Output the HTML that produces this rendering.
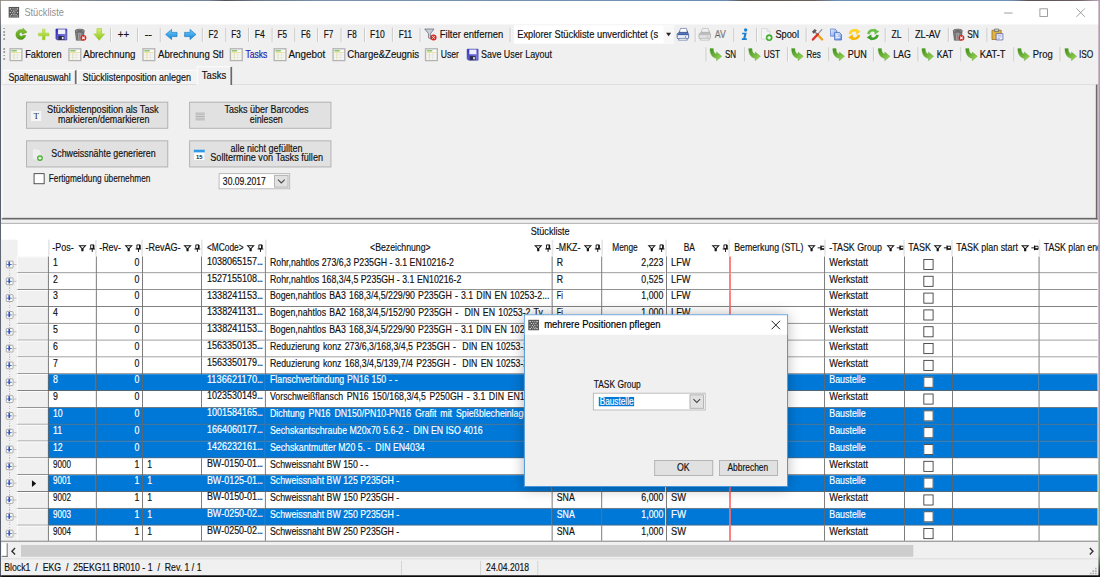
<!DOCTYPE html>
<html lang="de"><head><meta charset="utf-8"><title>Stückliste</title>
<style>
html,body{margin:0;padding:0;background:#0a0a0a;overflow:hidden;}
body{width:1100px;height:577px;position:relative;font-family:"Liberation Sans",sans-serif;}
#root{position:absolute;left:0;top:0;width:1308px;height:687px;transform-origin:0 0;overflow:hidden;background:#0b0b0b;}
#root *{box-sizing:border-box;}
#bgtop{position:absolute;left:0;top:0;width:1308px;height:3px;background:linear-gradient(90deg,#8c857a 0%,#857f78 6%,#5f6c80 9%,#566a84 19%,#2c2c36 20.5%,#4a5a70 23%,#5f7fa0 30%,#56789c 45%,#4f7aa8 60%,#4a74a0 66%,#3a3230 67.5%,#4a4038 74%,#4f7aa8 76%,#4f7aa8 92%,#3a2a30 93.5%,#4a3a40 98%,#b79ab4 100%);}
#bgright{position:absolute;left:1305px;top:0;width:3px;height:687px;background:linear-gradient(180deg,#b79ab4 0%,#b092ae 70%,#a8a0a8 78%,#8fae8a 84%,#86a682 96%,#1a1a1a 99.5%);}
#bgleft{position:absolute;left:0;top:0;width:2px;height:687px;background:linear-gradient(180deg,#8a857d 0%,#6f6f74 3%,#3c4658 6%,#3a4356 60%,#2f3646 100%);}
#win{position:absolute;left:1px;top:1px;width:1305px;height:683px;background:#f0f0f0;overflow:hidden;}
/* title */
#title{position:absolute;left:0;top:0;width:1305px;height:28.2px;background:#fff;}
.appico{position:absolute;}
.ttxt{position:absolute;font-size:12.1px;color:#929292;line-height:16px;height:16px;white-space:nowrap;}
.wc{position:absolute;top:8.6px;width:10px;height:10px;overflow:visible;}
/* toolbars */
#tb1,#tb2{position:static;}
.ic{position:absolute;overflow:visible;}
.sep{position:absolute;width:2px;height:17px;border-left:1px solid #c5c5c5;border-right:1px solid #fbfbfb;}
.grip{position:absolute;width:2px;height:15px;background:repeating-linear-gradient(180deg,#9c9c9c 0,#9c9c9c 2px,transparent 2px,transparent 4px);}
.tt{-webkit-text-stroke:0.2px #111;position:absolute;font-size:12.1px;line-height:18px;height:18px;white-space:nowrap;color:#111;}
.tt.blue{color:#2a1be0;}
.tt.dis{color:#9a9a9a;}
.combo1{position:absolute;background:#fff;}
.combo1 .ddz{position:absolute;right:0;top:0;bottom:0;width:12px;background:#f8f8f8;}
.combo1 .dd{position:absolute;right:2.5px;top:9px;width:0;height:0;border-left:3.5px solid transparent;border-right:3.5px solid transparent;border-top:4px solid #222;}
/* tabs */
#tabs{position:absolute;left:0;top:76px;width:1305px;height:30px;}
.tab{-webkit-text-stroke:0.2px;position:absolute;font-size:12.3px;line-height:14px;color:#111;white-space:nowrap;}
#tabpage{position:absolute;left:1.5px;top:99.7px;width:1297px;height:159px;border-top:1px solid #dcdcdc;border-right:2px solid #696969;border-bottom:2px solid #696969;border-left:1px solid #fff;background:#f0f0f0;}
.btn{position:absolute;background:#e1e1e1;border:1px solid #adadad;font-size:11.3px;line-height:13px;color:#111;text-align:center;}
.btn .bi{position:absolute;width:16px;height:16px;}
.btn .bt{position:absolute;left:22px;right:2px;top:50%;transform:translateY(-50%);white-space:nowrap;}
.chk{position:absolute;width:13px;height:13px;border:1px solid #333;background:#fff;}
.lbl{-webkit-text-stroke:0.2px;position:absolute;font-size:12.3px;line-height:14px;color:#111;white-space:nowrap;}
.dcombo{position:absolute;background:#fff;border:1px solid #adadad;}
.dcombo .v{position:absolute;left:4px;top:2px;font-size:11.3px;line-height:14px;color:#111;}
.ddb{position:absolute;right:1px;top:1px;bottom:1px;width:17px;background:#e1e1e1;border:1px solid #adadad;}
.ddb svg{position:absolute;left:3px;top:4.5px;width:9px;height:6px;overflow:visible;}
/* grid */
#grid{position:static;}
#gbg{position:absolute;left:0;top:264.3px;width:1305px;height:380px;background:#fff;border-top:1px solid #a0a0a0;}
.gt{-webkit-text-stroke:0.2px;position:absolute;font-size:12.3px;line-height:14px;height:14px;color:#111;white-space:nowrap;}
#gleft{position:absolute;background:#f0f0f0;}
.hs{position:absolute;width:2px;background:#e6e6e6;}
.hf{position:absolute;overflow:visible;}
.row{position:absolute;left:0;width:1305px;}
.row .c{-webkit-text-stroke:0.2px;position:absolute;top:0;height:100%;border-left:1.3px solid #646464;border-bottom:1.3px solid #646464;font-size:12.3px;line-height:14.4px;color:#111;white-space:pre;overflow:hidden;padding:0 3.2px 0 5.2px;background:#fff;}
.row .c.ar{text-align:right;padding-right:3.2px;}
.row .c em{font-style:normal;letter-spacing:-1.1px;}
.row .c.ac{text-align:center;padding:0;}
.row .c.mc{line-height:12.4px;}
.row.sel .c{background:#0078d7;color:#fff;}
.row .c.red{border-left:2.2px solid #ff6a6a;}
.rh{position:absolute;top:0;height:100%;background:#f0f0f0;border-bottom:1.3px solid #646464;border-top:1.2px solid #fff;border-left:1.4px solid #fff;}
.cur{position:absolute;left:17px;top:5px;width:0;height:0;border-top:4.5px solid transparent;border-bottom:4.5px solid transparent;border-left:5.5px solid #111;}
.exp{position:absolute;left:5.6px;top:4.7px;width:9.2px;height:9.2px;border:1.2px solid #9a9a9a;border-radius:1.2px;background:#fff;z-index:2;}
.exp:before{content:"";position:absolute;left:0.7px;top:2.85px;width:5.4px;height:1.2px;background:#2f55c0;}
.exp:after{content:"";position:absolute;left:2.8px;top:0.7px;width:1.2px;height:5.4px;background:#2f55c0;}
.expl{position:absolute;left:14.8px;top:8.9px;width:4px;height:1px;background:#b8b8b8;}
.expl:after{content:"";position:absolute;left:-5.2px;top:5px;width:1px;height:10.6px;background:repeating-linear-gradient(180deg,#b0b0b0 0,#b0b0b0 1px,transparent 1px,transparent 2px);}
.row:last-child .expl:after{display:none;}
.cb{display:inline-block;width:12.4px;height:12.6px;border:1.25px solid #333;background:#fff;margin-top:3px;vertical-align:top;}
/* bottom */
#hs{position:absolute;left:0;top:643.4px;width:1305px;height:19.6px;background:#f0f0f0;border-top:1.2px solid #6e6e6e;}
#hs .thumb{position:absolute;background:#cdcdcd;}
#hs .crn{position:absolute;background:#fff;border-right:1.6px solid #555;border-bottom:1.6px solid #555;}
#hs .ar{position:absolute;overflow:visible;}
#status{position:absolute;left:0;top:663px;width:1305px;height:21px;background:#f0f0f0;border-top:1px solid #d9d9d9;font-size:11.3px;color:#111;}
#status span{position:absolute;top:4px;line-height:14px;white-space:nowrap;}
#status i{position:absolute;top:2px;width:1px;height:17px;background:#d0d0d0;}
/* dialog */
#dlg{position:absolute;background:#f0f0f0;border:1.4px solid #2f86d8;box-shadow:0 1px 16px rgba(0,0,0,.30);}
#dlg .dt{position:absolute;left:0;top:0;right:0;background:#fff;}
#dlgc{position:absolute;left:1px;top:1px;width:0;height:0;}
.dtt{-webkit-text-stroke:0.2px;position:absolute;font-size:12.1px;line-height:16px;height:16px;color:#000;white-space:nowrap;}
.hlbg{position:absolute;background:#0078d7;}

.tabu{position:absolute;background:#f3f3f3;border-top:1px solid #fff;border-left:1px solid #fff;border-right:2px solid #696969;}
.tabu.nor{border-right:none;}
.tabs{position:absolute;background:#f0f0f0;border-top:1px solid #fff;border-left:1px solid #fff;border-right:2px solid #696969;}
.dico{position:absolute;}
.dx{position:absolute;overflow:visible;}
.v.hl{background:#0078d7;color:#fff;padding:0 1px;left:3px !important;}
.bt2{position:absolute;left:0;right:0;top:50%;transform:translateY(-50%);line-height:13px;}
.szg{position:absolute;right:1px;bottom:1px;width:12px;height:12px;}
.fx{transform-origin:0 50%;}
.row .c .x{display:inline-block;transform-origin:0 50%;vertical-align:top;}
.row .c.ar .x{transform-origin:100% 50%;}

</style></head>
<body>
<svg width="0" height="0" style="position:absolute">
<defs>
<linearGradient id="gGreen" x1="0" y1="0" x2="0" y2="1"><stop offset="0" stop-color="#b6e04a"/><stop offset="1" stop-color="#5a9e12"/></linearGradient>
<linearGradient id="gBlue" x1="0" y1="0" x2="0" y2="1"><stop offset="0" stop-color="#6fd0ff"/><stop offset="1" stop-color="#1583d6"/></linearGradient>
<linearGradient id="gYel" x1="0" y1="0" x2="0" y2="1"><stop offset="0" stop-color="#ffe169"/><stop offset="1" stop-color="#f2a900"/></linearGradient>
<linearGradient id="gGreen2" x1="0" y1="0" x2="0" y2="1"><stop offset="0" stop-color="#8cc63a"/><stop offset="1" stop-color="#4f9a14"/></linearGradient>
<linearGradient id="gGreenL" x1="0" y1="0" x2="0" y2="1"><stop offset="0" stop-color="#d4f06a"/><stop offset="1" stop-color="#8cc21e"/></linearGradient>
<linearGradient id="gSave" x1="0" y1="0" x2="1" y2="1"><stop offset="0" stop-color="#2f2fc0"/><stop offset="1" stop-color="#8c8ce0"/></linearGradient>
<linearGradient id="gTrash" x1="0" y1="0" x2="1" y2="0"><stop offset="0" stop-color="#6e6e6e"/><stop offset=".5" stop-color="#b4b4b4"/><stop offset="1" stop-color="#6a6a6a"/></linearGradient>
<linearGradient id="gArrow" x1="0" y1="0" x2="1" y2="1"><stop offset="0" stop-color="#3c8f1a"/><stop offset="1" stop-color="#a4dc5c"/></linearGradient>
<linearGradient id="gPage" x1="0" y1="0" x2="1" y2="1"><stop offset="0" stop-color="#eef4ff"/><stop offset="1" stop-color="#6f9ae6"/></linearGradient>
<g id="i-app"><rect x="0" y="0" width="16" height="16" fill="#565656"/><path d="M2 2h2v2h-2zM6 2h1.5v1.5H6zM9 2.5h1.5V4H9zM12 2h2v2h-2zM4 5h1.5v1.5H4zM7 5.5h2V7H7zM10.5 5h1.5v1.5h-1.5zM2 7.5h1.5V9H2zM5.5 8h1.5v1.5H5.5zM9 8h1.5v1.5H9zM12.5 7.5H14V9h-1.5zM4 10.5h1.5V12H4zM7 10h2v1.5H7zM10.5 10.5H12V12h-1.5zM2 12.5h2v1.5H2zM6 13h1.5v1H6zM9 12.5h1.5V14H9zM12 12.5h2v1.5h-2z" fill="#d8d8d8"/></g>
<g id="i-refresh"><path d="M13.6 9A5.9 5.9 0 1 1 9.6 2.5L10.4 0.6L15.2 5.2L9 7.6L9.7 5.8A2.4 2.4 0 1 0 10.4 9z" fill="url(#gGreen2)" stroke="#4c8f12" stroke-width=".5"/></g>
<g id="i-plus"><path d="M6.4 1.8h3.2v4.6h4.6v3.2H9.6v4.6H6.4V9.6H1.8V6.4h4.6z" fill="url(#gGreenL)" stroke="#9bcf2a" stroke-width=".6"/></g>
<g id="i-save"><path d="M1.5 1.5h13v13h-11.5l-1.5-1.5z" fill="url(#gSave)" stroke="#2a2aa0" stroke-width=".7"/><rect x="4" y="2" width="8.5" height="5.5" fill="#f0f0fa"/><rect x="4.5" y="9.8" width="7" height="4.7" fill="#2b2b4a"/><rect x="8.6" y="10.8" width="2" height="2.8" fill="#e8e8f4"/></g>
<g id="i-trash"><path d="M2.6 4.4h10.4l-1.2 10.4H3.8z" fill="url(#gTrash)" stroke="#4a4a4a" stroke-width=".7"/><ellipse cx="7.8" cy="3.8" rx="5.6" ry="2.2" fill="#9a9a9a" stroke="#4a4a4a" stroke-width=".7"/><ellipse cx="7.8" cy="3.8" rx="4" ry="1.2" fill="#6a6a6a"/><path d="M5.2 7v6.6M7.8 7v6.8M10.4 7v6.6" stroke="#5a5a5a" stroke-width=".7"/><circle cx="12.2" cy="12" r="3.5" fill="#d8261c"/><path d="M10.8 10.6l2.8 2.8M13.6 10.6l-2.8 2.8" stroke="#fff" stroke-width="1.2"/></g>
<g id="i-down"><path d="M5.2 1h5.6v6.4h3.6L8 15 1.6 7.4h3.6z" fill="url(#gGreenL)" stroke="#93c524" stroke-width=".6"/></g>
<g id="i-left"><path d="M8 2v3.5h6.5v5H8V14L1 8z" fill="url(#gBlue)" stroke="#1b78c2" stroke-width=".8"/></g>
<g id="i-right"><path d="M8 2v3.5H1.5v5H8V14l7-6z" fill="url(#gBlue)" stroke="#1b78c2" stroke-width=".8"/></g>
<g id="i-filter"><path d="M1 1.5h11L8 7v6.5L5.5 12V7z" fill="#c8cdd6" stroke="#5a6170" stroke-width=".8"/><circle cx="11.5" cy="11.5" r="3.6" fill="#d8261c"/><path d="M10 10l3 3M13 10l-3 3" stroke="#fff" stroke-width="1.1"/></g>
<g id="i-printer"><path d="M2 6.8L4.4 3.2H13.4L14.8 6.8Z" fill="#3f62a8"/><path d="M5.2 0.8H12.2L13.2 5.4H3.8Z" fill="#ffffff" stroke="#2b4688" stroke-width=".6"/><rect x="1.2" y="6.6" width="13.6" height="6.4" rx="1.2" fill="#eef3fb" stroke="#2b4688" stroke-width=".9"/><rect x="1.6" y="6.9" width="12.8" height="1.9" fill="#3f62a8"/><rect x="10.4" y="10.2" width="1.3" height="1.3" fill="#c83a2a"/><path d="M3.6 12.6h8.8l.9 2.2H2.7z" fill="#ffffff" stroke="#2b4688" stroke-width=".6"/></g>
<g id="i-printerg"><path d="M2 6.8L4.4 3.2H13.4L14.8 6.8Z" fill="#bdbdbd"/><path d="M5.2 0.8H12.2L13.2 5.4H3.8Z" fill="#efefef" stroke="#a8a8a8" stroke-width=".6"/><rect x="1.2" y="6.6" width="13.6" height="6.4" rx="1.2" fill="#e2e2e2" stroke="#a8a8a8" stroke-width=".9"/><rect x="1.6" y="6.9" width="12.8" height="1.9" fill="#bdbdbd"/><rect x="10.4" y="10.2" width="1.3" height="1.3" fill="#b0b0b0"/><path d="M3.6 12.6h8.8l.9 2.2H2.7z" fill="#efefef" stroke="#a8a8a8" stroke-width=".6"/></g>
<g id="i-info"><circle cx="9.6" cy="2.7" r="2" fill="#1c7fd0"/><path d="M5.6 5.8h5.4l-1.7 6.8h1.9l-.4 1.9H4.9l.4-1.9h1.5l1.2-4.9H5.2z" fill="#1c7fd0"/></g>
<g id="i-docplus"><path d="M2.5 1h6.5l3.5 3.5V13.5h-10z" fill="#f4f4f4" stroke="#d2d2d2" stroke-width=".8"/><path d="M9 1v3.5h3.5" fill="none" stroke="#d2d2d2" stroke-width=".8"/><circle cx="11.6" cy="11.8" r="3.7" fill="#3fae2a" stroke="#2c8a1c" stroke-width=".4"/><circle cx="11.6" cy="11.8" r="2.4" fill="#7fd36a"/><path d="M11.6 10v3.6M9.8 11.8h3.6" stroke="#fff" stroke-width="1.3"/></g>
<g id="i-tools"><path d="M4.5 4.5L8.2 8.4" stroke="#8a8a8a" stroke-width="1.8"/><path d="M8.2 8.4L13.6 14" stroke="#f0a01e" stroke-width="2.8" stroke-linecap="round"/><path d="M1.4 4.8L4.8 1.4L7.2 3.4L3.6 7z" fill="#5a5a5a"/><path d="M13.6 1.6L8.6 7.6" stroke="#8f8f8f" stroke-width="1.3"/><path d="M8.4 7.8L2.6 14" stroke="#d8322a" stroke-width="2.8" stroke-linecap="round"/></g>
<g id="i-copy"><path d="M1.5 1.5h5.5l2 2V10h-7.5z" fill="url(#gPage)" stroke="#4a72c8" stroke-width=".8"/><path d="M6.5 5.5h5.5l2.5 2.5V14.5h-8z" fill="url(#gPage)" stroke="#2f5cc0" stroke-width=".9"/><path d="M8.2 9.5h2.5M8.2 11.5h4.5" stroke="#fff" stroke-width=".9"/></g>
<g id="i-syncy"><path d="M2.6 7.6A5.4 5.4 0 0 1 11.4 4.2" fill="none" stroke="#ffd42a" stroke-width="3"/><path d="M9.6 0.9L15.4 4.4L10 8.2z" fill="#ffd42a"/><path d="M13.4 8.4A5.4 5.4 0 0 1 4.6 11.8" fill="none" stroke="#f7b500" stroke-width="3"/><path d="M6.4 15.1L0.6 11.6L6 7.8z" fill="#f7b500"/></g>
<g id="i-syncg"><path d="M2.6 7.6A5.4 5.4 0 0 1 11.4 4.2" fill="none" stroke="#6cc04a" stroke-width="3"/><path d="M9.6 0.9L15.4 4.4L10 8.2z" fill="#6cc04a"/><path d="M13.4 8.4A5.4 5.4 0 0 1 4.6 11.8" fill="none" stroke="#3f9f2a" stroke-width="3"/><path d="M6.4 15.1L0.6 11.6L6 7.8z" fill="#3f9f2a"/></g>
<g id="i-clip"><path d="M1.5 3h11v11h-11z" fill="#e2b340" stroke="#8a6414" stroke-width=".8"/><path d="M4.5 1.5h5v3h-5z" fill="#c8c8c8" stroke="#555" stroke-width=".7"/><path d="M6.5 7h8v7.5h-8z" fill="#f8f8ff" stroke="#44509a" stroke-width=".8"/><path d="M8 9h5M8 11h5M8 13h3" stroke="#7a84c0" stroke-width=".7"/></g>
<g id="i-table"><rect x="1" y="1" width="14" height="14" fill="#fafaf4" stroke="#b4b4b4" stroke-width="1.6"/><rect x="2.6" y="2.6" width="6.4" height="1.6" fill="#7fc060"/><path d="M2.2 5.6h11.6M5.6 5.6v8.2" stroke="#e4d88a" stroke-width="1"/><path d="M2.2 8.4h11.6M2.2 11.2h11.6M9.6 5.6v8.2" stroke="#dcdcdc" stroke-width=".8"/></g>
<g id="i-garrow"><path d="M1.2 0.8L5.2 0.8C5.2 4.5 6.5 7 9 7.5L9 4.8L15.2 10L9 15.2L9 12.3C4 12 1.2 7.5 1.2 0.8Z" fill="url(#gArrow)" stroke="#5a9e2a" stroke-width=".4"/></g>
<g id="i-filt"><path d="M0 0.5H10L6.3 4.6V7.7H3.7V4.6Z" fill="#111"/><path d="M2.7 1.8H7.3L5 4.2Z" fill="#fff"/></g>
<g id="i-pin"><path d="M1.5 0.6H5.3V5H1.5Z" fill="#fff" stroke="#111" stroke-width="1.1"/><path d="M4 0.6H5.6V5H4Z" fill="#111"/><path d="M0 5.4H6.8" stroke="#111" stroke-width="1.3"/><path d="M3.4 5.4V9" stroke="#111" stroke-width="1.1"/></g>
<g id="i-pinh"><path d="M4.2 1.2H8.2V4.8H4.2Z" fill="#fff" stroke="#111" stroke-width="1.1"/><path d="M4.2 3.6H8.4V5.2H4.2Z" fill="#111"/><path d="M3.8 0.2V6" stroke="#111" stroke-width="1.3"/><path d="M0 3.1H3.8" stroke="#111" stroke-width="1.1"/></g>
</defs>
</svg>

<div id="root" style="transform:scale(0.841);">
<div id="bgleft"></div><div id="bgright"></div><div id="bgtop"></div>
<div id="win">
<div id="title"><svg class="appico" style="left:8.8px;top:6.8px;width:13.0px;height:13.3px" viewBox="0 0 16 16"><use href="#i-app"/></svg><span class="ttxt fx" style="left:27.8px;top:6.0px;transform:scaleX(0.908);">Stückliste</span><svg class="wc" style="left:1192.6px" viewBox="0 0 10 10"><path d="M0 5.5H10" stroke="#8e8e8e" fill="none"/></svg><svg class="wc" style="left:1235.1px" viewBox="0 0 10 10"><rect x="0.5" y="0.5" width="9" height="9" stroke="#8e8e8e" fill="none"/></svg><svg class="wc" style="left:1279.1px" viewBox="0 0 10 10"><path d="M0 0L10 10M10 0L0 10" stroke="#8e8e8e" fill="none"/></svg></div>
<div id="tb1"><i class="grip" style="left:2.9px;top:32.4px"></i><svg class="ic" style="left:15.5px;top:32.0px;width:16px;height:16px" viewBox="0 0 16 16"><use href="#i-refresh"/></svg><svg class="ic" style="left:42.7px;top:32.0px;width:16px;height:16px" viewBox="0 0 16 16"><use href="#i-plus"/></svg><svg class="ic" style="left:64.2px;top:32.0px;width:16px;height:16px" viewBox="0 0 16 16"><use href="#i-save"/></svg><svg class="ic" style="left:86.1px;top:32.0px;width:16px;height:16px" viewBox="0 0 16 16"><use href="#i-trash"/></svg><svg class="ic" style="left:108.5px;top:32.0px;width:16px;height:16px" viewBox="0 0 16 16"><use href="#i-down"/></svg><i class="sep" style="left:129.7px;top:31.5px"></i><span class="tt fx " style="left:138.5px;top:31.4px;transform:scaleX(0.959)">++</span><i class="sep" style="left:162.0px;top:31.5px"></i><span class="tt fx " style="left:170.8px;top:31.4px;transform:scaleX(1.077)">--</span><i class="sep" style="left:189.2px;top:31.5px"></i><svg class="ic" style="left:194.8px;top:32.0px;width:16px;height:16px" viewBox="0 0 16 16"><use href="#i-left"/></svg><svg class="ic" style="left:216.9px;top:32.0px;width:16px;height:16px" viewBox="0 0 16 16"><use href="#i-right"/></svg><i class="sep" style="left:238.8px;top:31.5px"></i><i class="sep" style="left:266.5px;top:31.5px"></i><i class="sep" style="left:293.9px;top:31.5px"></i><i class="sep" style="left:321.6px;top:31.5px"></i><i class="sep" style="left:349.1px;top:31.5px"></i><i class="sep" style="left:376.3px;top:31.5px"></i><i class="sep" style="left:404.2px;top:31.5px"></i><i class="sep" style="left:431.8px;top:31.5px"></i><i class="sep" style="left:465.3px;top:31.5px"></i><i class="sep" style="left:497.8px;top:31.5px"></i><span class="tt fx " style="left:246.6px;top:31.4px;transform:scaleX(0.808)">F2</span><span class="tt fx " style="left:274.0px;top:31.4px;transform:scaleX(0.808)">F3</span><span class="tt fx " style="left:301.6px;top:31.4px;transform:scaleX(0.842)">F4</span><span class="tt fx " style="left:329.3px;top:31.4px;transform:scaleX(0.800)">F5</span><span class="tt fx " style="left:356.8px;top:31.4px;transform:scaleX(0.808)">F6</span><span class="tt fx " style="left:384.3px;top:31.4px;transform:scaleX(0.808)">F7</span><span class="tt fx " style="left:412.0px;top:31.4px;transform:scaleX(0.792)">F8</span><span class="tt fx " style="left:439.4px;top:31.4px;transform:scaleX(0.838)">F10</span><span class="tt fx " style="left:472.7px;top:31.4px;transform:scaleX(0.799)">F11</span><svg class="ic" style="left:502.9px;top:32.0px;width:16px;height:16px" viewBox="0 0 16 16"><use href="#i-filter"/></svg><span class="tt fx " style="left:521.7px;top:31.4px;transform:scaleX(0.928)">Filter entfernen</span><i class="sep" style="left:605.3px;top:31.5px"></i><div class="combo1" style="left:610.2px;top:29.4px;width:189.8px;height:21.3px"><span class="tt fx" style="left:3.9px;top:2.0px;transform:scaleX(0.916)">Explorer Stückliste unverdichtet (s</span><i class="ddz"></i><i class="dd"></i></div><svg class="ic" style="left:803.1px;top:32.0px;width:16px;height:16px" viewBox="0 0 16 16"><use href="#i-printer"/></svg><i class="sep" style="left:825.4px;top:31.5px"></i><svg class="ic" style="left:829.3px;top:32.0px;width:16px;height:16px" viewBox="0 0 16 16"><use href="#i-printerg"/></svg><span class="tt fx dis" style="left:848.6px;top:31.4px;transform:scaleX(0.858)">AV</span><i class="sep" style="left:870.7px;top:31.5px"></i><svg class="ic" style="left:876.3px;top:32.0px;width:16px;height:16px" viewBox="0 0 16 16"><use href="#i-info"/></svg><i class="sep" style="left:897.8px;top:31.5px"></i><svg class="ic" style="left:901.8px;top:32.0px;width:16px;height:16px" viewBox="0 0 16 16"><use href="#i-docplus"/></svg><span class="tt fx " style="left:920.5px;top:31.4px;transform:scaleX(0.907)">Spool</span><i class="sep" style="left:957.3px;top:31.5px"></i><svg class="ic" style="left:963.3px;top:32.0px;width:16px;height:16px" viewBox="0 0 16 16"><use href="#i-tools"/></svg><svg class="ic" style="left:984.6px;top:32.0px;width:16px;height:16px" viewBox="0 0 16 16"><use href="#i-copy"/></svg><svg class="ic" style="left:1006.9px;top:32.0px;width:16px;height:16px" viewBox="0 0 16 16"><use href="#i-syncy"/></svg><svg class="ic" style="left:1029.0px;top:32.0px;width:16px;height:16px" viewBox="0 0 16 16"><use href="#i-syncg"/></svg><i class="sep" style="left:1050.7px;top:31.5px"></i><span class="tt fx " style="left:1058.5px;top:31.4px;transform:scaleX(0.842)">ZL</span><i class="sep" style="left:1079.0px;top:31.5px"></i><span class="tt fx " style="left:1087.3px;top:31.4px;transform:scaleX(0.904)">ZL-AV</span><i class="sep" style="left:1126.1px;top:31.5px"></i><svg class="ic" style="left:1130.4px;top:32.0px;width:16px;height:16px" viewBox="0 0 16 16"><use href="#i-trash"/></svg><span class="tt fx " style="left:1149.2px;top:31.4px;transform:scaleX(0.828)">SN</span><i class="sep" style="left:1171.6px;top:31.5px"></i><svg class="ic" style="left:1177.3px;top:32.0px;width:16px;height:16px" viewBox="0 0 16 16"><use href="#i-clip"/></svg></div>
<div id="tb2"><i class="grip" style="left:2.9px;top:56.4px"></i><svg class="ic" style="left:9.8px;top:55.6px;width:16px;height:16px" viewBox="0 0 16 16"><use href="#i-table"/></svg><span class="tt fx " style="left:28.8px;top:55.0px;transform:scaleX(0.906)">Faktoren</span><svg class="ic" style="left:79.6px;top:55.6px;width:16px;height:16px" viewBox="0 0 16 16"><use href="#i-table"/></svg><span class="tt fx " style="left:98.4px;top:55.0px;transform:scaleX(0.951)">Abrechnung</span><svg class="ic" style="left:167.8px;top:55.6px;width:16px;height:16px" viewBox="0 0 16 16"><use href="#i-table"/></svg><span class="tt fx " style="left:186.6px;top:55.0px;transform:scaleX(0.941)">Abrechnung Stl</span><svg class="ic" style="left:271.6px;top:55.6px;width:16px;height:16px" viewBox="0 0 16 16"><use href="#i-table"/></svg><span class="tt fx blue" style="left:290.9px;top:55.0px;transform:scaleX(0.838)">Tasks</span><svg class="ic" style="left:323.9px;top:55.6px;width:16px;height:16px" viewBox="0 0 16 16"><use href="#i-table"/></svg><span class="tt fx " style="left:342.3px;top:55.0px;transform:scaleX(0.971)">Angebot</span><svg class="ic" style="left:393.5px;top:55.6px;width:16px;height:16px" viewBox="0 0 16 16"><use href="#i-table"/></svg><span class="tt fx " style="left:412.0px;top:55.0px;transform:scaleX(0.940)">Charge&amp;Zeugnis</span><svg class="ic" style="left:504.4px;top:55.6px;width:16px;height:16px" viewBox="0 0 16 16"><use href="#i-table"/></svg><span class="tt fx " style="left:523.3px;top:55.0px;transform:scaleX(0.847)">User</span><svg class="ic" style="left:552.6px;top:55.6px;width:16px;height:16px" viewBox="0 0 16 16"><use href="#i-save"/></svg><span class="tt fx " style="left:570.8px;top:55.0px;transform:scaleX(0.877)">Save User Layout</span><i class="sep" style="left:837.6px;top:55.1px"></i><svg class="ic" style="left:842.4px;top:55.6px;width:16px;height:16px" viewBox="0 0 16 16"><use href="#i-garrow"/></svg><span class="tt fx " style="left:861.0px;top:55.0px;transform:scaleX(0.785)">SN</span><i class="sep" style="left:883.7px;top:55.1px"></i><svg class="ic" style="left:888.0px;top:55.6px;width:16px;height:16px" viewBox="0 0 16 16"><use href="#i-garrow"/></svg><span class="tt fx " style="left:907.0px;top:55.0px;transform:scaleX(0.806)">UST</span><i class="sep" style="left:934.7px;top:55.1px"></i><svg class="ic" style="left:939.3px;top:55.6px;width:16px;height:16px" viewBox="0 0 16 16"><use href="#i-garrow"/></svg><span class="tt fx " style="left:958.2px;top:55.0px;transform:scaleX(0.790)">Res</span><i class="sep" style="left:983.5px;top:55.1px"></i><svg class="ic" style="left:987.9px;top:55.6px;width:16px;height:16px" viewBox="0 0 16 16"><use href="#i-garrow"/></svg><span class="tt fx " style="left:1006.5px;top:55.0px;transform:scaleX(0.889)">PUN</span><i class="sep" style="left:1037.2px;top:55.1px"></i><svg class="ic" style="left:1041.9px;top:55.6px;width:16px;height:16px" viewBox="0 0 16 16"><use href="#i-garrow"/></svg><span class="tt fx " style="left:1060.5px;top:55.0px;transform:scaleX(0.869)">LAG</span><i class="sep" style="left:1089.5px;top:55.1px"></i><svg class="ic" style="left:1094.4px;top:55.6px;width:16px;height:16px" viewBox="0 0 16 16"><use href="#i-garrow"/></svg><span class="tt fx " style="left:1112.9px;top:55.0px;transform:scaleX(0.846)">KAT</span><i class="sep" style="left:1140.8px;top:55.1px"></i><svg class="ic" style="left:1145.6px;top:55.6px;width:16px;height:16px" viewBox="0 0 16 16"><use href="#i-garrow"/></svg><span class="tt fx " style="left:1164.3px;top:55.0px;transform:scaleX(0.919)">KAT-T</span><i class="sep" style="left:1203.6px;top:55.1px"></i><svg class="ic" style="left:1208.4px;top:55.6px;width:16px;height:16px" viewBox="0 0 16 16"><use href="#i-garrow"/></svg><span class="tt fx " style="left:1226.9px;top:55.0px;transform:scaleX(0.930)">Prog</span><i class="sep" style="left:1259.3px;top:55.1px"></i><svg class="ic" style="left:1263.7px;top:55.6px;width:16px;height:16px" viewBox="0 0 16 16"><use href="#i-garrow"/></svg><span class="tt fx " style="left:1282.0px;top:55.0px;transform:scaleX(0.816)">ISO</span></div>
<div class="tabu" style="left:3.0px;top:81.6px;width:86.8px;height:17.6px"></div>
<div class="tabu nor" style="left:90.9px;top:81.6px;width:141.9px;height:17.6px"></div>
<span class="tab fx" style="left:9.2px;top:83.6px;transform:scaleX(0.853);">Spaltenauswahl</span>
<span class="tab fx" style="left:96.9px;top:83.6px;transform:scaleX(0.866);">Stücklistenposition anlegen</span>
<div id="tabpage" style="left:0.9px;top:99.0px;width:1303.2px;height:160.9px"></div>
<div class="tabs" style="left:232.5px;top:78.4px;width:42.2px;height:21.9px"></div>
<span class="tab fx" style="left:239.0px;top:81.8px;transform:scaleX(0.919);">Tasks</span>
<div class="btn" style="left:30.4px;top:119.8px;width:168.5px;height:32.1px"><svg class="bi" style="left:2.7px;top:8.4px" viewBox="0 0 16 16"><rect x="2" y="2" width="12" height="12" fill="#f6f6f6"/><text x="8" y="12" text-anchor="middle" font-family="Liberation Serif,serif" font-size="10.5" fill="#222">T</text></svg></div>
<div class="btn" style="left:224.4px;top:119.8px;width:168.5px;height:32.1px"><svg class="bi" style="left:3.2px;top:8.4px" viewBox="0 0 16 16"><path d="M2.5 4.5h11M2.5 6.5h11M2.5 8.5h11M2.5 10.5h11M2.5 12.5h11" stroke="#a9a9a9" stroke-width="1"/></svg></div>
<div class="btn" style="left:30.4px;top:165.5px;width:168.5px;height:32.1px"><svg class="bi" style="left:4.1px;top:8.1px" viewBox="0 0 16 16"><path d="M2.5 1h7l3.5 3.5V14h-10.5z" fill="#eeeeee" stroke="#dcdcdc" stroke-width=".8"/><circle cx="11.5" cy="12" r="3.4" fill="#3fae2a"/><path d="M11.5 10v4M9.5 12h4" stroke="#fff" stroke-width="1.3"/></svg></div>
<div class="btn" style="left:224.4px;top:165.5px;width:168.5px;height:32.1px"><svg class="bi" style="left:2.7px;top:8.1px" viewBox="0 0 16 16"><rect x="1.5" y="2" width="13" height="12.5" fill="#fff" stroke="#d8d8d8" stroke-width=".6"/><rect x="1.5" y="2" width="13" height="3.2" fill="#2f9be8"/><text x="8" y="12.6" text-anchor="middle" font-family="Liberation Sans,sans-serif" font-weight="bold" font-size="7" fill="#222">15</text></svg></div>
<span class="lbl fx" style="left:55.4px;top:122.3px;transform:scaleX(0.888);">Stücklistenposition als Task</span>
<span class="lbl fx" style="left:67.5px;top:133.7px;transform:scaleX(0.859);">markieren/demarkieren</span>
<span class="lbl fx" style="left:265.8px;top:122.3px;transform:scaleX(0.870);">Tasks über Barcodes</span>
<span class="lbl fx" style="left:296.3px;top:133.7px;transform:scaleX(0.856);">einlesen</span>
<span class="lbl fx" style="left:60.4px;top:174.5px;transform:scaleX(0.856);">Schweissnähte generieren</span>
<span class="lbl fx" style="left:273.0px;top:168.7px;transform:scaleX(0.869);">alle nicht gefüllten</span>
<span class="lbl fx" style="left:249.4px;top:180.1px;transform:scaleX(0.881);">Solltermine von Tasks füllen</span>
<div class="chk" style="left:39.0px;top:205.4px"></div>
<span class="lbl fx" style="left:57.1px;top:205.2px;transform:scaleX(0.800);">Fertigmeldung übernehmen</span>
<div class="dcombo" style="left:258.7px;top:204.7px;width:85.6px;height:19.7px"><div class="ddb"><svg viewBox="0 0 9 6"><path d="M0.5 0.5L4.5 4.5L8.5 0.5" fill="none" stroke="#444" stroke-width="1.2"/></svg></div></div>
<span class="lbl fx" style="left:263.7px;top:207.6px;transform:scaleX(0.829);">30.09.2017</span>
<div id="grid"><div id="gbg"></div>
<span class="gt fx" style="left:629.8px;top:267.9px;transform:scaleX(0.881);">Stückliste</span>
<div id="gleft" style="left:0;top:284.4px;width:19.5px;height:358.5px"></div>
<i class="hs" style="left:55.5px;top:284.4px;height:18.4px"></i>
<span class="gt fx" style="left:60.5px;top:286.9px;transform:scaleX(0.870);">-Pos-</span>
<svg class="hf" style="left:91.7px;top:289.5px" viewBox="0 0 21 10" width="21" height="10"><use href="#i-filt"/><use href="#i-pin" x="13.3" y="-0.4"/></svg>
<i class="hs" style="left:112.4px;top:284.4px;height:18.4px"></i>
<span class="gt fx" style="left:117.3px;top:286.9px;transform:scaleX(0.860);">-Rev-</span>
<svg class="hf" style="left:146.7px;top:289.5px" viewBox="0 0 21 10" width="21" height="10"><use href="#i-filt"/><use href="#i-pin" x="13.3" y="-0.4"/></svg>
<i class="hs" style="left:167.0px;top:284.4px;height:18.4px"></i>
<span class="gt fx" style="left:172.0px;top:286.9px;transform:scaleX(0.870);">-RevAG-</span>
<svg class="hf" style="left:217.2px;top:289.5px" viewBox="0 0 21 10" width="21" height="10"><use href="#i-filt"/><use href="#i-pin" x="13.3" y="-0.4"/></svg>
<i class="hs" style="left:237.9px;top:284.4px;height:18.4px"></i>
<span class="gt fx" style="left:245.1px;top:286.9px;transform:scaleX(0.809);">&lt;MCode&gt;</span>
<svg class="hf" style="left:292.4px;top:289.5px" viewBox="0 0 21 10" width="21" height="10"><use href="#i-filt"/><use href="#i-pin" x="13.3" y="-0.4"/></svg>
<i class="hs" style="left:313.8px;top:284.4px;height:18.4px"></i>
<span class="gt fx" style="left:439.4px;top:286.9px;transform:scaleX(0.843);">&lt;Bezeichnung&gt;</span>
<svg class="hf" style="left:634.3px;top:289.5px" viewBox="0 0 21 10" width="21" height="10"><use href="#i-filt"/><use href="#i-pin" x="13.3" y="-0.4"/></svg>
<i class="hs" style="left:654.8px;top:284.4px;height:18.4px"></i>
<span class="gt fx" style="left:659.5px;top:286.9px;transform:scaleX(0.853);">-MKZ-</span>
<svg class="hf" style="left:692.8px;top:289.5px" viewBox="0 0 21 10" width="21" height="10"><use href="#i-filt"/><use href="#i-pin" x="13.3" y="-0.4"/></svg>
<i class="hs" style="left:713.7px;top:284.4px;height:18.4px"></i>
<span class="gt fx" style="left:727.3px;top:286.9px;transform:scaleX(0.806);">Menge</span>
<svg class="hf" style="left:769.2px;top:289.5px" viewBox="0 0 21 10" width="21" height="10"><use href="#i-filt"/><use href="#i-pin" x="13.3" y="-0.4"/></svg>
<i class="hs" style="left:790.0px;top:284.4px;height:18.4px"></i>
<span class="gt fx" style="left:812.0px;top:286.9px;transform:scaleX(0.815);">BA</span>
<svg class="hf" style="left:845.0px;top:289.5px" viewBox="0 0 21 10" width="21" height="10"><use href="#i-filt"/><use href="#i-pin" x="13.3" y="-0.4"/></svg>
<i class="hs" style="left:865.3px;top:284.4px;height:18.4px"></i>
<span class="gt fx" style="left:871.5px;top:286.9px;transform:scaleX(0.848);">Bemerkung (STL)</span>
<svg class="hf" style="left:958.6px;top:289.5px" viewBox="0 0 21 10" width="21" height="10"><use href="#i-filt"/><use href="#i-pinh" x="12.3" y="0.6"/></svg>
<i class="hs" style="left:978.7px;top:284.4px;height:18.4px"></i>
<span class="gt fx" style="left:984.5px;top:286.9px;transform:scaleX(0.859);">-TASK Group</span>
<svg class="hf" style="left:1052.8px;top:289.5px" viewBox="0 0 21 10" width="21" height="10"><use href="#i-filt"/><use href="#i-pinh" x="12.3" y="0.6"/></svg>
<i class="hs" style="left:1073.4px;top:284.4px;height:18.4px"></i>
<span class="gt fx" style="left:1078.8px;top:286.9px;transform:scaleX(0.865);">TASK</span>
<svg class="hf" style="left:1108.8px;top:289.5px" viewBox="0 0 21 10" width="21" height="10"><use href="#i-filt"/><use href="#i-pinh" x="12.3" y="0.6"/></svg>
<i class="hs" style="left:1130.1px;top:284.4px;height:18.4px"></i>
<span class="gt fx" style="left:1135.5px;top:286.9px;transform:scaleX(0.862);">TASK plan start</span>
<svg class="hf" style="left:1213.3px;top:289.5px" viewBox="0 0 21 10" width="21" height="10"><use href="#i-filt"/><use href="#i-pinh" x="12.3" y="0.6"/></svg>
<i class="hs" style="left:1233.9px;top:284.4px;height:18.4px"></i>
<span class="gt fx" style="left:1240.4px;top:286.9px;transform:scaleX(0.847);">TASK plan end</span>
<div class="row" style="top:304.11px;height:20.00px">
<i class="exp"></i><i class="expl"></i>
<b class="rh" style="left:18.8px;width:37.2px"></b>
<span class="c al" style="left:56.0px;width:56.8px;"><span class="x" style="transform:scaleX(0.849)">1</span></span>
<span class="c ar" style="left:112.9px;width:54.7px;"><span class="x" style="transform:scaleX(0.849)">0</span></span>
<span class="c al" style="left:167.5px;width:70.9px;"></span>
<span class="c al mc" style="left:238.4px;width:75.9px;"><span class="x" style="transform:scaleX(0.873)">1038065157<em>...</em></span></span>
<span class="c al bez" style="left:314.3px;width:341.0px;"><span class="x" style="transform:scaleX(0.849);word-spacing:0.00px">Rohr,nahtlos 273/6,3 P235GH - 3.1 EN10216-2</span></span>
<span class="c al" style="left:655.3px;width:58.9px;"><span class="x" style="transform:scaleX(0.849)">R</span></span>
<span class="c ar" style="left:714.2px;width:76.3px;"><span class="x" style="transform:scaleX(0.850)">2,223</span></span>
<span class="c al" style="left:790.5px;width:75.3px;"><span class="x" style="transform:scaleX(0.882)">LFW</span></span>
<span class="c al red" style="left:865.8px;width:113.4px;"></span>
<span class="c al" style="left:979.2px;width:94.6px;"><span class="x" style="transform:scaleX(0.892)">Werkstatt</span></span>
<span class="c ac" style="left:1073.9px;width:56.7px;"><u class="cb"></u></span>
<span class="c al" style="left:1130.6px;width:103.8px;"></span>
<span class="c al" style="left:1234.4px;width:69.9px;"></span>
</div>
<div class="row" style="top:324.11px;height:20.00px">
<i class="exp"></i><i class="expl"></i>
<b class="rh" style="left:18.8px;width:37.2px"></b>
<span class="c al" style="left:56.0px;width:56.8px;"><span class="x" style="transform:scaleX(0.849)">2</span></span>
<span class="c ar" style="left:112.9px;width:54.7px;"><span class="x" style="transform:scaleX(0.849)">0</span></span>
<span class="c al" style="left:167.5px;width:70.9px;"></span>
<span class="c al mc" style="left:238.4px;width:75.9px;"><span class="x" style="transform:scaleX(0.873)">1527155108<em>...</em></span></span>
<span class="c al bez" style="left:314.3px;width:341.0px;"><span class="x" style="transform:scaleX(0.849);word-spacing:0.00px">Rohr,nahtlos 168,3/4,5 P235GH - 3.1 EN10216-2</span></span>
<span class="c al" style="left:655.3px;width:58.9px;"><span class="x" style="transform:scaleX(0.849)">R</span></span>
<span class="c ar" style="left:714.2px;width:76.3px;"><span class="x" style="transform:scaleX(0.850)">0,525</span></span>
<span class="c al" style="left:790.5px;width:75.3px;"><span class="x" style="transform:scaleX(0.882)">LFW</span></span>
<span class="c al red" style="left:865.8px;width:113.4px;"></span>
<span class="c al" style="left:979.2px;width:94.6px;"><span class="x" style="transform:scaleX(0.892)">Werkstatt</span></span>
<span class="c ac" style="left:1073.9px;width:56.7px;"><u class="cb"></u></span>
<span class="c al" style="left:1130.6px;width:103.8px;"></span>
<span class="c al" style="left:1234.4px;width:69.9px;"></span>
</div>
<div class="row" style="top:344.11px;height:20.00px">
<i class="exp"></i><i class="expl"></i>
<b class="rh" style="left:18.8px;width:37.2px"></b>
<span class="c al" style="left:56.0px;width:56.8px;"><span class="x" style="transform:scaleX(0.849)">3</span></span>
<span class="c ar" style="left:112.9px;width:54.7px;"><span class="x" style="transform:scaleX(0.849)">0</span></span>
<span class="c al" style="left:167.5px;width:70.9px;"></span>
<span class="c al mc" style="left:238.4px;width:75.9px;"><span class="x" style="transform:scaleX(0.884)">1338241153<em>...</em></span></span>
<span class="c al bez" style="left:314.3px;width:341.0px;"><span class="x" style="transform:scaleX(0.849);word-spacing:1.00px">Bogen,nahtlos BA3 168,3/4,5/229/90 P235GH - 3.1 DIN EN 10253-2...</span></span>
<span class="c al" style="left:655.3px;width:58.9px;"><span class="x" style="transform:scaleX(0.696)">Fi</span></span>
<span class="c ar" style="left:714.2px;width:76.3px;"><span class="x" style="transform:scaleX(0.850)">1,000</span></span>
<span class="c al" style="left:790.5px;width:75.3px;"><span class="x" style="transform:scaleX(0.882)">LFW</span></span>
<span class="c al red" style="left:865.8px;width:113.4px;"></span>
<span class="c al" style="left:979.2px;width:94.6px;"><span class="x" style="transform:scaleX(0.892)">Werkstatt</span></span>
<span class="c ac" style="left:1073.9px;width:56.7px;"><u class="cb"></u></span>
<span class="c al" style="left:1130.6px;width:103.8px;"></span>
<span class="c al" style="left:1234.4px;width:69.9px;"></span>
</div>
<div class="row" style="top:364.11px;height:20.00px">
<i class="exp"></i><i class="expl"></i>
<b class="rh" style="left:18.8px;width:37.2px"></b>
<span class="c al" style="left:56.0px;width:56.8px;"><span class="x" style="transform:scaleX(0.849)">4</span></span>
<span class="c ar" style="left:112.9px;width:54.7px;"><span class="x" style="transform:scaleX(0.849)">0</span></span>
<span class="c al" style="left:167.5px;width:70.9px;"></span>
<span class="c al mc" style="left:238.4px;width:75.9px;"><span class="x" style="transform:scaleX(0.884)">1338241131<em>...</em></span></span>
<span class="c al bez" style="left:314.3px;width:341.0px;"><span class="x" style="transform:scaleX(0.849);word-spacing:1.09px">Bogen,nahtlos BA2 168,3/4,5/152/90 P235GH -  DIN EN 10253-2 Ty...</span></span>
<span class="c al" style="left:655.3px;width:58.9px;"><span class="x" style="transform:scaleX(0.696)">Fi</span></span>
<span class="c ar" style="left:714.2px;width:76.3px;"><span class="x" style="transform:scaleX(0.850)">1,000</span></span>
<span class="c al" style="left:790.5px;width:75.3px;"><span class="x" style="transform:scaleX(0.882)">LFW</span></span>
<span class="c al red" style="left:865.8px;width:113.4px;"></span>
<span class="c al" style="left:979.2px;width:94.6px;"><span class="x" style="transform:scaleX(0.892)">Werkstatt</span></span>
<span class="c ac" style="left:1073.9px;width:56.7px;"><u class="cb"></u></span>
<span class="c al" style="left:1130.6px;width:103.8px;"></span>
<span class="c al" style="left:1234.4px;width:69.9px;"></span>
</div>
<div class="row" style="top:384.11px;height:20.00px">
<i class="exp"></i><i class="expl"></i>
<b class="rh" style="left:18.8px;width:37.2px"></b>
<span class="c al" style="left:56.0px;width:56.8px;"><span class="x" style="transform:scaleX(0.849)">5</span></span>
<span class="c ar" style="left:112.9px;width:54.7px;"><span class="x" style="transform:scaleX(0.849)">0</span></span>
<span class="c al" style="left:167.5px;width:70.9px;"></span>
<span class="c al mc" style="left:238.4px;width:75.9px;"><span class="x" style="transform:scaleX(0.884)">1338241153<em>...</em></span></span>
<span class="c al bez" style="left:314.3px;width:341.0px;"><span class="x" style="transform:scaleX(0.849);word-spacing:1.00px">Bogen,nahtlos BA3 168,3/4,5/229/90 P235GH - 3.1 DIN EN 10253-2...</span></span>
<span class="c al" style="left:655.3px;width:58.9px;"></span>
<span class="c ar" style="left:714.2px;width:76.3px;"></span>
<span class="c al" style="left:790.5px;width:75.3px;"></span>
<span class="c al red" style="left:865.8px;width:113.4px;"></span>
<span class="c al" style="left:979.2px;width:94.6px;"><span class="x" style="transform:scaleX(0.892)">Werkstatt</span></span>
<span class="c ac" style="left:1073.9px;width:56.7px;"><u class="cb"></u></span>
<span class="c al" style="left:1130.6px;width:103.8px;"></span>
<span class="c al" style="left:1234.4px;width:69.9px;"></span>
</div>
<div class="row" style="top:404.11px;height:20.00px">
<i class="exp"></i><i class="expl"></i>
<b class="rh" style="left:18.8px;width:37.2px"></b>
<span class="c al" style="left:56.0px;width:56.8px;"><span class="x" style="transform:scaleX(0.849)">6</span></span>
<span class="c ar" style="left:112.9px;width:54.7px;"><span class="x" style="transform:scaleX(0.849)">0</span></span>
<span class="c al" style="left:167.5px;width:70.9px;"></span>
<span class="c al mc" style="left:238.4px;width:75.9px;"><span class="x" style="transform:scaleX(0.873)">1563350135<em>...</em></span></span>
<span class="c al bez" style="left:314.3px;width:341.0px;"><span class="x" style="transform:scaleX(0.849);word-spacing:1.04px">Reduzierung konz 273/6,3/168,3/4,5 P235GH -  DIN EN 10253-2 Ty...</span></span>
<span class="c al" style="left:655.3px;width:58.9px;"></span>
<span class="c ar" style="left:714.2px;width:76.3px;"></span>
<span class="c al" style="left:790.5px;width:75.3px;"></span>
<span class="c al red" style="left:865.8px;width:113.4px;"></span>
<span class="c al" style="left:979.2px;width:94.6px;"><span class="x" style="transform:scaleX(0.892)">Werkstatt</span></span>
<span class="c ac" style="left:1073.9px;width:56.7px;"><u class="cb"></u></span>
<span class="c al" style="left:1130.6px;width:103.8px;"></span>
<span class="c al" style="left:1234.4px;width:69.9px;"></span>
</div>
<div class="row" style="top:424.11px;height:20.00px">
<i class="exp"></i><i class="expl"></i>
<b class="rh" style="left:18.8px;width:37.2px"></b>
<span class="c al" style="left:56.0px;width:56.8px;"><span class="x" style="transform:scaleX(0.849)">7</span></span>
<span class="c ar" style="left:112.9px;width:54.7px;"><span class="x" style="transform:scaleX(0.849)">0</span></span>
<span class="c al" style="left:167.5px;width:70.9px;"></span>
<span class="c al mc" style="left:238.4px;width:75.9px;"><span class="x" style="transform:scaleX(0.873)">1563350179<em>...</em></span></span>
<span class="c al bez" style="left:314.3px;width:341.0px;"><span class="x" style="transform:scaleX(0.849);word-spacing:1.04px">Reduzierung konz 168,3/4,5/139,7/4 P235GH -  DIN EN 10253-2 Ty...</span></span>
<span class="c al" style="left:655.3px;width:58.9px;"></span>
<span class="c ar" style="left:714.2px;width:76.3px;"></span>
<span class="c al" style="left:790.5px;width:75.3px;"></span>
<span class="c al red" style="left:865.8px;width:113.4px;"></span>
<span class="c al" style="left:979.2px;width:94.6px;"><span class="x" style="transform:scaleX(0.892)">Werkstatt</span></span>
<span class="c ac" style="left:1073.9px;width:56.7px;"><u class="cb"></u></span>
<span class="c al" style="left:1130.6px;width:103.8px;"></span>
<span class="c al" style="left:1234.4px;width:69.9px;"></span>
</div>
<div class="row sel" style="top:444.11px;height:20.00px">
<i class="exp"></i><i class="expl"></i>
<b class="rh" style="left:18.8px;width:37.2px"></b>
<span class="c al" style="left:56.0px;width:56.8px;"><span class="x" style="transform:scaleX(0.849)">8</span></span>
<span class="c ar" style="left:112.9px;width:54.7px;"><span class="x" style="transform:scaleX(0.849)">0</span></span>
<span class="c al" style="left:167.5px;width:70.9px;"></span>
<span class="c al mc" style="left:238.4px;width:75.9px;"><span class="x" style="transform:scaleX(0.897)">1136621170<em>...</em></span></span>
<span class="c al bez" style="left:314.3px;width:341.0px;"><span class="x" style="transform:scaleX(0.849);word-spacing:0.42px">Flanschverbindung PN16 150 - -</span></span>
<span class="c al" style="left:655.3px;width:58.9px;"></span>
<span class="c ar" style="left:714.2px;width:76.3px;"></span>
<span class="c al" style="left:790.5px;width:75.3px;"></span>
<span class="c al red" style="left:865.8px;width:113.4px;"></span>
<span class="c al" style="left:979.2px;width:94.6px;"><span class="x" style="transform:scaleX(0.858)">Baustelle</span></span>
<span class="c ac" style="left:1073.9px;width:56.7px;"><u class="cb"></u></span>
<span class="c al" style="left:1130.6px;width:103.8px;"></span>
<span class="c al" style="left:1234.4px;width:69.9px;"></span>
</div>
<div class="row" style="top:464.11px;height:20.00px">
<i class="exp"></i><i class="expl"></i>
<b class="rh" style="left:18.8px;width:37.2px"></b>
<span class="c al" style="left:56.0px;width:56.8px;"><span class="x" style="transform:scaleX(0.849)">9</span></span>
<span class="c ar" style="left:112.9px;width:54.7px;"><span class="x" style="transform:scaleX(0.849)">0</span></span>
<span class="c al" style="left:167.5px;width:70.9px;"></span>
<span class="c al mc" style="left:238.4px;width:75.9px;"><span class="x" style="transform:scaleX(0.873)">1023530149<em>...</em></span></span>
<span class="c al bez" style="left:314.3px;width:341.0px;"><span class="x" style="transform:scaleX(0.849);word-spacing:1.54px">Vorschweißflansch PN16 150/168,3/4,5 P250GH - 3.1 DIN EN1092-1...</span></span>
<span class="c al" style="left:655.3px;width:58.9px;"></span>
<span class="c ar" style="left:714.2px;width:76.3px;"></span>
<span class="c al" style="left:790.5px;width:75.3px;"></span>
<span class="c al red" style="left:865.8px;width:113.4px;"></span>
<span class="c al" style="left:979.2px;width:94.6px;"><span class="x" style="transform:scaleX(0.892)">Werkstatt</span></span>
<span class="c ac" style="left:1073.9px;width:56.7px;"><u class="cb"></u></span>
<span class="c al" style="left:1130.6px;width:103.8px;"></span>
<span class="c al" style="left:1234.4px;width:69.9px;"></span>
</div>
<div class="row sel" style="top:484.11px;height:20.00px">
<i class="exp"></i><i class="expl"></i>
<b class="rh" style="left:18.8px;width:37.2px"></b>
<span class="c al" style="left:56.0px;width:56.8px;"><span class="x" style="transform:scaleX(0.849)">10</span></span>
<span class="c ar" style="left:112.9px;width:54.7px;"><span class="x" style="transform:scaleX(0.849)">0</span></span>
<span class="c al" style="left:167.5px;width:70.9px;"></span>
<span class="c al mc" style="left:238.4px;width:75.9px;"><span class="x" style="transform:scaleX(0.873)">1001584165<em>...</em></span></span>
<span class="c al bez" style="left:314.3px;width:341.0px;"><span class="x" style="transform:scaleX(0.849);word-spacing:2.07px">Dichtung PN16 DN150/PN10-PN16 Grafit mit Spießblecheinlage</span></span>
<span class="c al" style="left:655.3px;width:58.9px;"></span>
<span class="c ar" style="left:714.2px;width:76.3px;"></span>
<span class="c al" style="left:790.5px;width:75.3px;"></span>
<span class="c al red" style="left:865.8px;width:113.4px;"></span>
<span class="c al" style="left:979.2px;width:94.6px;"><span class="x" style="transform:scaleX(0.858)">Baustelle</span></span>
<span class="c ac" style="left:1073.9px;width:56.7px;"><u class="cb"></u></span>
<span class="c al" style="left:1130.6px;width:103.8px;"></span>
<span class="c al" style="left:1234.4px;width:69.9px;"></span>
</div>
<div class="row sel" style="top:504.11px;height:20.00px">
<i class="exp"></i><i class="expl"></i>
<b class="rh" style="left:18.8px;width:37.2px"></b>
<span class="c al" style="left:56.0px;width:56.8px;"><span class="x" style="transform:scaleX(0.849)">11</span></span>
<span class="c ar" style="left:112.9px;width:54.7px;"><span class="x" style="transform:scaleX(0.849)">0</span></span>
<span class="c al" style="left:167.5px;width:70.9px;"></span>
<span class="c al mc" style="left:238.4px;width:75.9px;"><span class="x" style="transform:scaleX(0.873)">1664060177<em>...</em></span></span>
<span class="c al bez" style="left:314.3px;width:341.0px;"><span class="x" style="transform:scaleX(0.849);word-spacing:0.00px">Sechskantschraube M20x70 5.6-2 -  DIN EN ISO 4016</span></span>
<span class="c al" style="left:655.3px;width:58.9px;"></span>
<span class="c ar" style="left:714.2px;width:76.3px;"></span>
<span class="c al" style="left:790.5px;width:75.3px;"></span>
<span class="c al red" style="left:865.8px;width:113.4px;"></span>
<span class="c al" style="left:979.2px;width:94.6px;"><span class="x" style="transform:scaleX(0.858)">Baustelle</span></span>
<span class="c ac" style="left:1073.9px;width:56.7px;"><u class="cb"></u></span>
<span class="c al" style="left:1130.6px;width:103.8px;"></span>
<span class="c al" style="left:1234.4px;width:69.9px;"></span>
</div>
<div class="row sel" style="top:524.11px;height:20.00px">
<i class="exp"></i><i class="expl"></i>
<b class="rh" style="left:18.8px;width:37.2px"></b>
<span class="c al" style="left:56.0px;width:56.8px;"><span class="x" style="transform:scaleX(0.849)">12</span></span>
<span class="c ar" style="left:112.9px;width:54.7px;"><span class="x" style="transform:scaleX(0.849)">0</span></span>
<span class="c al" style="left:167.5px;width:70.9px;"></span>
<span class="c al mc" style="left:238.4px;width:75.9px;"><span class="x" style="transform:scaleX(0.873)">1426232161<em>...</em></span></span>
<span class="c al bez" style="left:314.3px;width:341.0px;"><span class="x" style="transform:scaleX(0.849);word-spacing:0.00px">Sechskantmutter M20 5. -  DIN EN4034</span></span>
<span class="c al" style="left:655.3px;width:58.9px;"></span>
<span class="c ar" style="left:714.2px;width:76.3px;"></span>
<span class="c al" style="left:790.5px;width:75.3px;"></span>
<span class="c al red" style="left:865.8px;width:113.4px;"></span>
<span class="c al" style="left:979.2px;width:94.6px;"><span class="x" style="transform:scaleX(0.858)">Baustelle</span></span>
<span class="c ac" style="left:1073.9px;width:56.7px;"><u class="cb"></u></span>
<span class="c al" style="left:1130.6px;width:103.8px;"></span>
<span class="c al" style="left:1234.4px;width:69.9px;"></span>
</div>
<div class="row" style="top:544.11px;height:20.00px">
<i class="exp"></i><i class="expl"></i>
<b class="rh" style="left:18.8px;width:37.2px"></b>
<span class="c al" style="left:56.0px;width:56.8px;"><span class="x" style="transform:scaleX(0.782)">9000</span></span>
<span class="c ar" style="left:112.9px;width:54.7px;"><span class="x" style="transform:scaleX(0.849)">1</span></span>
<span class="c al" style="left:167.5px;width:70.9px;"><span class="x" style="transform:scaleX(0.849)">1</span></span>
<span class="c al mc" style="left:238.4px;width:75.9px;"><span class="x" style="transform:scaleX(0.867)">BW-0150-01<em>...</em></span></span>
<span class="c al bez" style="left:314.3px;width:341.0px;"><span class="x" style="transform:scaleX(0.849);word-spacing:0.00px">Schweissnaht BW 150 - -</span></span>
<span class="c al" style="left:655.3px;width:58.9px;"></span>
<span class="c ar" style="left:714.2px;width:76.3px;"></span>
<span class="c al" style="left:790.5px;width:75.3px;"></span>
<span class="c al red" style="left:865.8px;width:113.4px;"></span>
<span class="c al" style="left:979.2px;width:94.6px;"><span class="x" style="transform:scaleX(0.892)">Werkstatt</span></span>
<span class="c ac" style="left:1073.9px;width:56.7px;"><u class="cb"></u></span>
<span class="c al" style="left:1130.6px;width:103.8px;"></span>
<span class="c al" style="left:1234.4px;width:69.9px;"></span>
</div>
<div class="row sel" style="top:564.11px;height:20.00px">
<i class="exp"></i><i class="expl"></i>
<b class="rh" style="left:18.8px;width:37.2px"><s class="cur"></s></b>
<span class="c al" style="left:56.0px;width:56.8px;"><span class="x" style="transform:scaleX(0.782)">9001</span></span>
<span class="c ar" style="left:112.9px;width:54.7px;"><span class="x" style="transform:scaleX(0.849)">1</span></span>
<span class="c al" style="left:167.5px;width:70.9px;"><span class="x" style="transform:scaleX(0.849)">1</span></span>
<span class="c al mc" style="left:238.4px;width:75.9px;"><span class="x" style="transform:scaleX(0.867)">BW-0125-01<em>...</em></span></span>
<span class="c al bez" style="left:314.3px;width:341.0px;"><span class="x" style="transform:scaleX(0.849);word-spacing:0.00px">Schweissnaht BW 125 P235GH -</span></span>
<span class="c al" style="left:655.3px;width:58.9px;"></span>
<span class="c ar" style="left:714.2px;width:76.3px;"></span>
<span class="c al" style="left:790.5px;width:75.3px;"></span>
<span class="c al red" style="left:865.8px;width:113.4px;"></span>
<span class="c al" style="left:979.2px;width:94.6px;"><span class="x" style="transform:scaleX(0.858)">Baustelle</span></span>
<span class="c ac" style="left:1073.9px;width:56.7px;"><u class="cb"></u></span>
<span class="c al" style="left:1130.6px;width:103.8px;"></span>
<span class="c al" style="left:1234.4px;width:69.9px;"></span>
</div>
<div class="row" style="top:584.11px;height:20.00px">
<i class="exp"></i><i class="expl"></i>
<b class="rh" style="left:18.8px;width:37.2px"></b>
<span class="c al" style="left:56.0px;width:56.8px;"><span class="x" style="transform:scaleX(0.782)">9002</span></span>
<span class="c ar" style="left:112.9px;width:54.7px;"><span class="x" style="transform:scaleX(0.849)">1</span></span>
<span class="c al" style="left:167.5px;width:70.9px;"><span class="x" style="transform:scaleX(0.849)">1</span></span>
<span class="c al mc" style="left:238.4px;width:75.9px;"><span class="x" style="transform:scaleX(0.867)">BW-0150-01<em>...</em></span></span>
<span class="c al bez" style="left:314.3px;width:341.0px;"><span class="x" style="transform:scaleX(0.849);word-spacing:0.00px">Schweissnaht BW 150 P235GH -</span></span>
<span class="c al" style="left:655.3px;width:58.9px;"><span class="x" style="transform:scaleX(0.846)">SNA</span></span>
<span class="c ar" style="left:714.2px;width:76.3px;"><span class="x" style="transform:scaleX(0.850)">6,000</span></span>
<span class="c al" style="left:790.5px;width:75.3px;"><span class="x" style="transform:scaleX(0.900)">SW</span></span>
<span class="c al red" style="left:865.8px;width:113.4px;"></span>
<span class="c al" style="left:979.2px;width:94.6px;"><span class="x" style="transform:scaleX(0.892)">Werkstatt</span></span>
<span class="c ac" style="left:1073.9px;width:56.7px;"><u class="cb"></u></span>
<span class="c al" style="left:1130.6px;width:103.8px;"></span>
<span class="c al" style="left:1234.4px;width:69.9px;"></span>
</div>
<div class="row sel" style="top:604.11px;height:20.00px">
<i class="exp"></i><i class="expl"></i>
<b class="rh" style="left:18.8px;width:37.2px"></b>
<span class="c al" style="left:56.0px;width:56.8px;"><span class="x" style="transform:scaleX(0.782)">9003</span></span>
<span class="c ar" style="left:112.9px;width:54.7px;"><span class="x" style="transform:scaleX(0.849)">1</span></span>
<span class="c al" style="left:167.5px;width:70.9px;"><span class="x" style="transform:scaleX(0.849)">1</span></span>
<span class="c al mc" style="left:238.4px;width:75.9px;"><span class="x" style="transform:scaleX(0.867)">BW-0250-02<em>...</em></span></span>
<span class="c al bez" style="left:314.3px;width:341.0px;"><span class="x" style="transform:scaleX(0.849);word-spacing:0.00px">Schweissnaht BW 250 P235GH -</span></span>
<span class="c al" style="left:655.3px;width:58.9px;"><span class="x" style="transform:scaleX(0.846)">SNA</span></span>
<span class="c ar" style="left:714.2px;width:76.3px;"><span class="x" style="transform:scaleX(0.850)">1,000</span></span>
<span class="c al" style="left:790.5px;width:75.3px;"><span class="x" style="transform:scaleX(0.933)">FW</span></span>
<span class="c al red" style="left:865.8px;width:113.4px;"></span>
<span class="c al" style="left:979.2px;width:94.6px;"><span class="x" style="transform:scaleX(0.858)">Baustelle</span></span>
<span class="c ac" style="left:1073.9px;width:56.7px;"><u class="cb"></u></span>
<span class="c al" style="left:1130.6px;width:103.8px;"></span>
<span class="c al" style="left:1234.4px;width:69.9px;"></span>
</div>
<div class="row" style="top:624.11px;height:20.00px">
<i class="exp"></i><i class="expl"></i>
<b class="rh" style="left:18.8px;width:37.2px"></b>
<span class="c al" style="left:56.0px;width:56.8px;"><span class="x" style="transform:scaleX(0.782)">9004</span></span>
<span class="c ar" style="left:112.9px;width:54.7px;"><span class="x" style="transform:scaleX(0.849)">1</span></span>
<span class="c al" style="left:167.5px;width:70.9px;"><span class="x" style="transform:scaleX(0.849)">1</span></span>
<span class="c al mc" style="left:238.4px;width:75.9px;"><span class="x" style="transform:scaleX(0.867)">BW-0250-02<em>...</em></span></span>
<span class="c al bez" style="left:314.3px;width:341.0px;"><span class="x" style="transform:scaleX(0.849);word-spacing:0.00px">Schweissnaht BW 250 P235GH -</span></span>
<span class="c al" style="left:655.3px;width:58.9px;"><span class="x" style="transform:scaleX(0.846)">SNA</span></span>
<span class="c ar" style="left:714.2px;width:76.3px;"><span class="x" style="transform:scaleX(0.850)">1,000</span></span>
<span class="c al" style="left:790.5px;width:75.3px;"><span class="x" style="transform:scaleX(0.900)">SW</span></span>
<span class="c al red" style="left:865.8px;width:113.4px;"></span>
<span class="c al" style="left:979.2px;width:94.6px;"><span class="x" style="transform:scaleX(0.892)">Werkstatt</span></span>
<span class="c ac" style="left:1073.9px;width:56.7px;"><u class="cb"></u></span>
<span class="c al" style="left:1130.6px;width:103.8px;"></span>
<span class="c al" style="left:1234.4px;width:69.9px;"></span>
</div>
</div>
<div id="hs" style="top:642.3px;height:20.2px"><div class="thumb" style="left:24.1px;width:1060.5px;top:3.8px;height:13.7px"></div><div class="crn" style="left:0.5px;top:2.0px;width:7.0px;height:16.2px"></div><svg class="ar" style="left:12.2px;top:6.6px" viewBox="0 0 7 11" width="5.8" height="9"><path d="M6 0.8L1.4 5.5L6 10.2" fill="none" stroke="#333" stroke-width="2"/></svg><svg class="ar" style="left:1294.1px;top:6.6px" viewBox="0 0 7 11" width="5.8" height="9"><path d="M1 0.8L5.6 5.5L1 10.2" fill="none" stroke="#333" stroke-width="2"/></svg></div>
<div id="status" style="top:662.9px;height:20.5px"><i style="left:475.8px"></i><i style="left:570.3px"></i><i style="left:638.1px"></i><svg class="szg" viewBox="0 0 12 12"><path d="M9 11h2M9 8h2M6 11h2M9 5h2M6 8h2M3 11h2" stroke="#b0b0b0" stroke-width="2" stroke-dasharray="2 10"/></svg></div>
<span class="lbl fx" style="left:3.8px;top:667.4px;transform:scaleX(0.847);white-space:pre;">Block1  /  EKG  /  25EKG11 BR010 - 1  /  Rev. 1 / 1</span>
<span class="lbl fx" style="left:576.9px;top:667.4px;transform:scaleX(0.831);">24.04.2018</span>
</div>
<div id="dlg" style="left:622.8px;top:373.6px;width:314.5px;height:205.0px"><div class="dt" style="height:23.4px"></div></div>
<div id="dlgc">
<svg class="dico" style="left:626.8px;top:379.3px" viewBox="0 0 16 16" width="13" height="13"><use href="#i-app"/></svg>
<span class="dtt fx" style="left:645.8px;top:377.4px;transform:scaleX(0.936);">mehrere Positionen pflegen</span>
<svg class="dx" style="left:916.2px;top:379.9px" viewBox="0 0 11 11" width="11" height="11"><path d="M0.5 0.5L10.5 10.5M10.5 0.5L0.5 10.5" stroke="#111" stroke-width="1.1" fill="none"/></svg>
<span class="lbl fx" style="left:705.3px;top:449.3px;transform:scaleX(0.812);">TASK Group</span>
<div class="dcombo" style="left:704.4px;top:465.5px;width:134.1px;height:21.0px"><div class="ddb"><svg viewBox="0 0 9 6"><path d="M0.5 0.5L4.5 4.5L8.5 0.5" fill="none" stroke="#444" stroke-width="1.2"/></svg></div></div>
<div class="hlbg" style="left:711.0px;top:471.1px;width:42.1px;height:10.9px"></div>
<span class="lbl fx" style="left:712.0px;top:469.2px;transform:scaleX(0.799);color:#fff;">Baustelle</span>
<div class="btn" style="left:777.0px;top:545.5px;width:69.8px;height:19.4px"></div>
<div class="btn" style="left:854.2px;top:545.5px;width:69.7px;height:19.4px"></div>
<span class="lbl fx" style="left:803.5px;top:548.4px;transform:scaleX(0.850);">OK</span>
<span class="lbl fx" style="left:864.0px;top:548.4px;transform:scaleX(0.815);">Abbrechen</span>
</div>
</div>
</body></html>
